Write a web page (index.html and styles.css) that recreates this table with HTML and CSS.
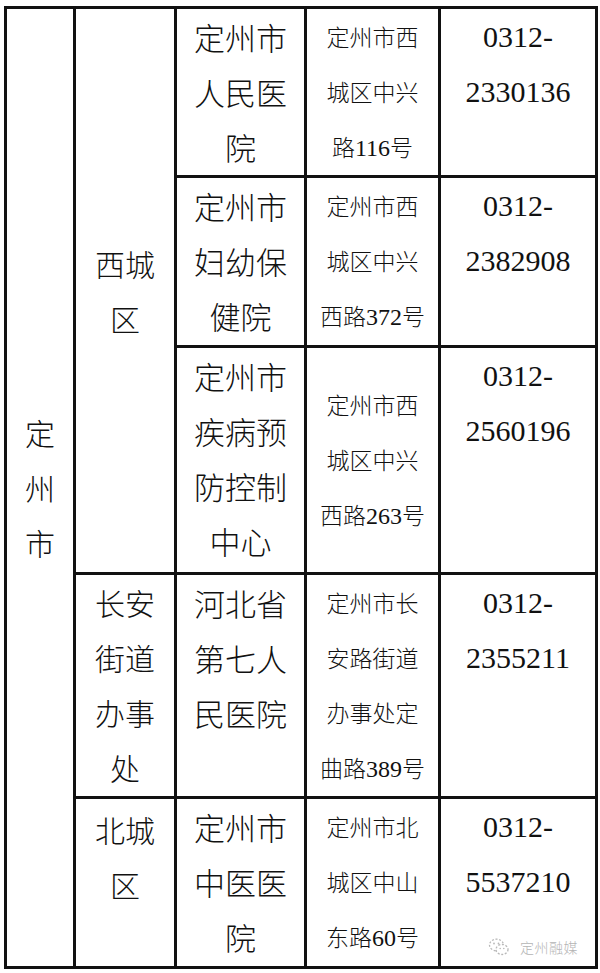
FILE: index.html
```html
<!DOCTYPE html>
<html>
<head>
<meta charset="utf-8">
<title>定州市</title>
<link rel="stylesheet" href="styles.css">
</head>
<body>
<div class="sheet">
  <div class="cell city mid"><div class="txt">定<br>州<br>市</div></div>
  <div class="cell area mid r1-3"><div class="txt">西城<br>区</div></div>

  <div class="cell name top"><div class="txt">定州市<br>人民医<br>院</div></div>
  <div class="cell addr mid"><div class="txt">定州市西<br>城区中兴<br>路<span class="num">116</span>号</div></div>
  <div class="cell tel top"><div class="txt num">0312-<br>2330136</div></div>

  <div class="cell name top"><div class="txt">定州市<br>妇幼保<br>健院</div></div>
  <div class="cell addr mid"><div class="txt">定州市西<br>城区中兴<br>西路<span class="num">372</span>号</div></div>
  <div class="cell tel top"><div class="txt num">0312-<br>2382908</div></div>

  <div class="cell name top"><div class="txt">定州市<br>疾病预<br>防控制<br>中心</div></div>
  <div class="cell addr mid"><div class="txt">定州市西<br>城区中兴<br>西路<span class="num">263</span>号</div></div>
  <div class="cell tel top"><div class="txt num">0312-<br>2560196</div></div>

  <div class="cell area top"><div class="txt">长安<br>街道<br>办事<br>处</div></div>
  <div class="cell name top"><div class="txt">河北省<br>第七人<br>民医院</div></div>
  <div class="cell addr mid"><div class="txt">定州市长<br>安路街道<br>办事处定<br>曲路<span class="num">389</span>号</div></div>
  <div class="cell tel top"><div class="txt num">0312-<br>2355211</div></div>

  <div class="cell area top shift"><div class="txt">北城<br>区</div></div>
  <div class="cell name top"><div class="txt">定州市<br>中医医<br>院</div></div>
  <div class="cell addr mid"><div class="txt">定州市北<br>城区中山<br>东路<span class="num">60</span>号</div></div>
  <div class="cell tel top last"><div class="txt num">0312-<br>5537210</div>
    <div class="mark">
      <svg class="mark-icon" viewBox="0 0 22 20" width="22" height="20">
        <ellipse cx="8.5" cy="8" rx="7" ry="5.8" fill="none" stroke="#b8b8b8" stroke-width="1.3" stroke-dasharray="2 1.6"/>
        <ellipse cx="14" cy="12.5" rx="6" ry="5" fill="#fff" stroke="#b8b8b8" stroke-width="1.3" stroke-dasharray="2 1.6"/>
        <circle cx="6" cy="6.5" r="0.9" fill="#b8b8b8"/>
        <circle cx="10.5" cy="6.5" r="0.9" fill="#b8b8b8"/>
        <circle cx="12.2" cy="11.5" r="0.8" fill="#b8b8b8"/>
        <circle cx="15.8" cy="11.5" r="0.8" fill="#b8b8b8"/>
      </svg>
      <span class="mark-text">定州融媒</span>
    </div>
  </div>
</div>
</body>
</html>
```

FILE: styles.css
```css
html, body {
  margin: 0;
  padding: 0;
  background: #ffffff;
}

body {
  font-family: "Noto Sans CJK SC", sans-serif;
  color: #111111;
}

.sheet {
  display: grid;
  grid-template-columns: 66px 98px 127px 131px 154px;
  grid-template-rows: 166px 167px 224px 221px 167px;
  gap: 3px;
  padding: 3px;
  background: #111111;
  width: max-content;
  margin: 6px 0 0 4px;
}

.cell {
  background: #ffffff;
  display: flex;
  flex-direction: column;
  align-items: center;
  text-align: center;
  line-height: 55px;
  font-weight: 300;
}

.txt {
  white-space: nowrap;
}

.num {
  font-family: "Liberation Serif", "Tinos", "Times New Roman", "DejaVu Serif", serif;
  font-weight: 400;
}

.addr .num {
  font-size: 24px;
}

.mid { justify-content: center; }
.top { justify-content: flex-start; }

.city {
  grid-column: 1;
  grid-row: 1 / 6;
  font-size: 30px;
}

.area {
  grid-column: 2;
  font-size: 30px;
}

.r1-3 { grid-row: 1 / 4; }

.shift { padding-top: 3px; }

.name {
  grid-column: 3;
  font-size: 31px;
}

.addr {
  grid-column: 4;
  font-size: 23px;
}

.tel {
  grid-column: 5;
  font-size: 30px;
}

.last { position: relative; }

.mark {
  position: absolute;
  right: 17px;
  bottom: 9px;
  display: flex;
  align-items: center;
  gap: 10px;
  line-height: 16px;
}

.mark-icon { display: block; }

.mark-text {
  font-family: "Noto Sans CJK SC", sans-serif;
  font-size: 14px;
  color: #b4b4b4;
  letter-spacing: 0.5px;
}
```
